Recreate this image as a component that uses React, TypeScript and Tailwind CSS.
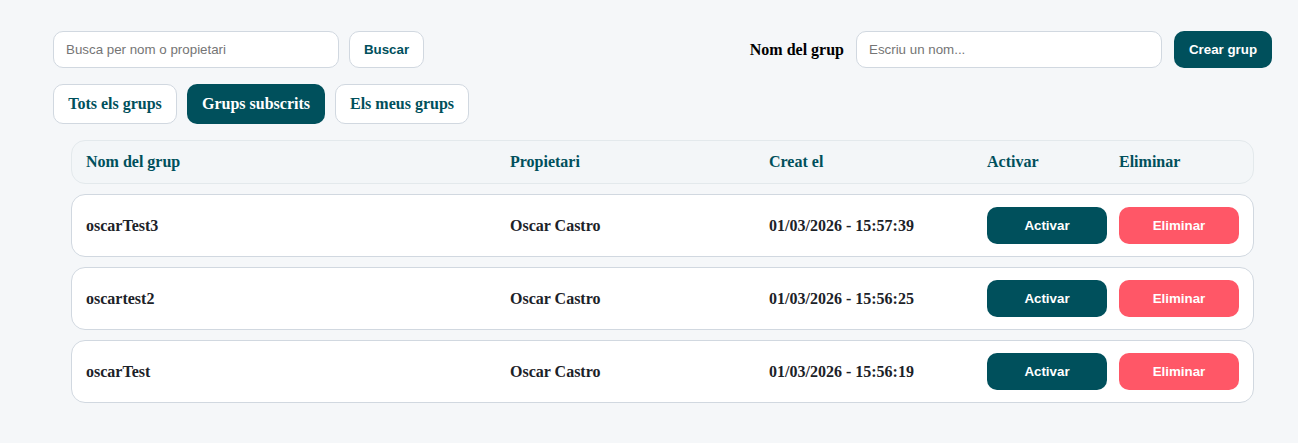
import React from 'react';

const rows = [
    { name: 'oscarTest3', owner: 'Oscar Castro', created: '01/03/2026 - 15:57:39' },
    { name: 'oscartest2', owner: 'Oscar Castro', created: '01/03/2026 - 15:56:25' },
    { name: 'oscarTest', owner: 'Oscar Castro', created: '01/03/2026 - 15:56:19' },
];

const gridCols = 'grid grid-cols-[424px_259px_218px_132px_120px] items-center';

export default function App() {
    return (
        <div className="min-h-[443px] bg-[#f5f7f9] pt-[31px] pl-[53px] pr-[26px] font-['Liberation_Serif',serif]">
            {/* Search + create */}
            <div className="flex items-center justify-between">
                <div className="flex items-center gap-[10px]">
                    <input
                        placeholder="Busca per nom o propietari"
                        className="h-[37px] w-[286px] rounded-[10px] border border-[#d1d8e0] bg-white px-3 font-['Liberation_Sans',sans-serif] text-[13.33px] outline-none placeholder:text-[#757575]"
                    />
                    <button className="h-[37px] w-[75px] rounded-[10px] border border-[#d1d8e0] bg-white font-['Liberation_Sans',sans-serif] text-[13.33px] font-bold text-[#00505c]">
                        Buscar
                    </button>
                </div>
                <div className="flex items-center">
                    <label className="mr-3 text-base font-bold text-black">Nom del grup</label>
                    <input
                        placeholder="Escriu un nom..."
                        className="h-[37px] w-[306px] rounded-[10px] border border-[#d1d8e0] bg-white px-3 font-['Liberation_Sans',sans-serif] text-[13.33px] outline-none placeholder:text-[#757575]"
                    />
                    <button className="ml-3 h-[37px] w-[98px] rounded-[10px] bg-[#00505c] font-['Liberation_Sans',sans-serif] text-[13.33px] font-bold text-white">
                        Crear grup
                    </button>
                </div>
            </div>

            {/* Tabs */}
            <div className="mt-4 flex gap-[10px]">
                <button className="h-10 w-[124px] rounded-[10px] border border-[#d1d8e0] bg-white text-base font-bold text-[#00505c]">
                    Tots els grups
                </button>
                <button className="h-10 w-[138px] rounded-[10px] bg-[#00505c] text-base font-bold text-white">
                    Grups subscrits
                </button>
                <button className="h-10 w-[134px] rounded-[10px] border border-[#d1d8e0] bg-white text-base font-bold text-[#00505c]">
                    Els meus grups
                </button>
            </div>

            {/* Table */}
            <div className="mt-4 ml-[18px] w-[1183px]">
                <div className={`${gridCols} h-[44px] rounded-[14px] border border-[#e3e9ec] bg-[#f3f6f8] px-[14px] text-base font-bold text-[#00505c]`}>
                    <span>Nom del grup</span>
                    <span>Propietari</span>
                    <span>Creat el</span>
                    <span>Activar</span>
                    <span>Eliminar</span>
                </div>
                <div className="mt-[10px] flex flex-col gap-[10px]">
                    {rows.map(r => (
                        <div key={r.name} className={`${gridCols} h-[63px] rounded-[14px] border border-[#d1d8e0] bg-white px-[14px] text-base font-bold text-[#1c2228]`}>
                            <span>{r.name}</span>
                            <span>{r.owner}</span>
                            <span>{r.created}</span>
                            <button className="h-[37px] w-[120px] rounded-[10px] bg-[#00505c] font-['Liberation_Sans',sans-serif] text-[13.33px] font-bold text-white">
                                Activar
                            </button>
                            <button className="h-[37px] w-[120px] rounded-[10px] bg-[#ff5767] font-['Liberation_Sans',sans-serif] text-[13.33px] font-bold text-white">
                                Eliminar
                            </button>
                        </div>
                    ))}
                </div>
            </div>
        </div>
    );
}
